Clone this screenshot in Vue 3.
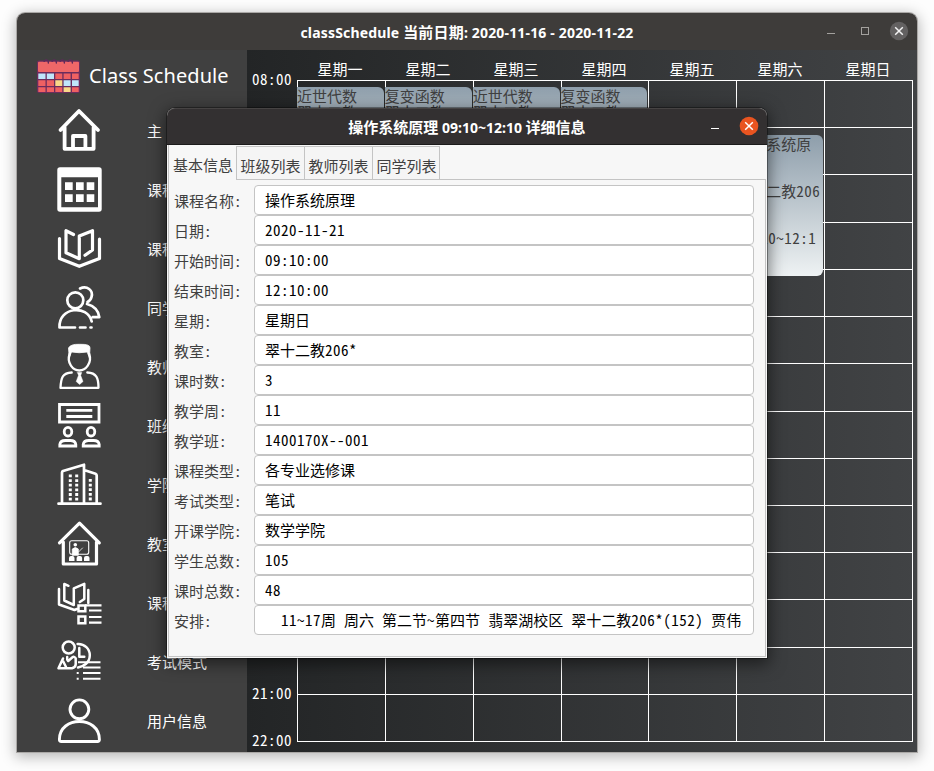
<script setup>
import { h } from 'vue'

// Latin runs sit on an 8px cell, ideographs on a 15px one.
const MixedText = (props) =>
  h('span', { class: 'mixed' },
    props.text.split(/([\x20-\x7e]+)/).filter(Boolean).map((part) =>
      /^[\x20-\x7e]/.test(part) ? h('span', { class: 'latin' }, part) : part))
MixedText.props = ['text']

const menu = [
  { icon: 'home', label: '主  页' },
  { icon: 'calendar', label: '课程表' },
  { icon: 'book', label: '课程信息' },
  { icon: 'students', label: '同学信息' },
  { icon: 'teacher', label: '教师信息' },
  { icon: 'class', label: '班级信息' },
  { icon: 'college', label: '学院信息' },
  { icon: 'classroom', label: '教室信息' },
  { icon: 'courseMode', label: '课程模式' },
  { icon: 'examMode', label: '考试模式' },
  { icon: 'user', label: '用户信息' },
]
const days = ['星期一', '星期二', '星期三', '星期四', '星期五', '星期六', '星期日']
const hours = [
  { text: '08:00', row: 1 },
  { text: '21:00', row: 14 },
  { text: '22:00', row: 15 },
]
const events = [
  { col: 1, name: '近世代数' },
  { col: 2, name: '复变函数' },
  { col: 3, name: '近世代数' },
  { col: 4, name: '复变函数' },
]
const tabs = ['基本信息', '班级列表', '教师列表', '同学列表']
const fields = [
  ['课程名称:', '操作系统原理'],
  ['日期:', '2020-11-21'],
  ['开始时间:', '09:10:00'],
  ['结束时间:', '12:10:00'],
  ['星期:', '星期日'],
  ['教室:', '翠十二教206*'],
  ['课时数:', '3'],
  ['教学周:', '11'],
  ['教学班:', '1400170X--001'],
  ['课程类型:', '各专业选修课'],
  ['考试类型:', '笔试'],
  ['开课学院:', '数学学院'],
  ['学生总数:', '105'],
  ['课时总数:', '48'],
  ['安排:', '  11~17周 周六 第二节~第四节 翡翠湖校区 翠十二教206*(152) 贾伟'],
]
</script>

<template>
  <div class="desktop">
    <div class="window">
      <header class="titlebar">
        <h1 class="title main-title">classSchedule <span class="han">当前日期</span>: 2020-11-16 - 2020-11-22</h1>
        <svg class="controls" width="90" height="24" viewBox="0 0 90 24" fill="none">
          <path d="M5 14.500h8" stroke="#a3a19e" />
          <rect x="39.500" y="8.500" width="7" height="7" stroke="#a3a19e" />
          <circle cx="77" cy="12" r="9.200" fill="#636161" />
          <path d="M73.200 8.200l7.600 7.600M80.800 8.200l-7.600 7.600" stroke="#f4f4f4" stroke-width="1.500" />
        </svg>
      </header>
      <div class="content">
        <aside class="sidebar">
          <div class="brand">
            <svg width="44" height="36" viewBox="0 0 44 36">
              <rect x="0" y="2.500" width="43" height="32.500" rx="2" fill="#6b2c5e" />
              <rect x="1" y="3.800" width="41" height="10.200" rx="1" fill="#ef6768" />
              <path d="M18.300 15.500h7v5.500h-7zM26.600 15.500h7v5.500h-7zM35 15.500h6.700v5.500H35zM1.300 22.300h7.200v5.700H1.300zM9.800 22.300h7.200v5.700H9.800zM1.300 29.300h7.200v4.700H1.300zM9.800 29.300h7.200v4.700H9.800zM18.300 29.300h7v4.700h-7zM35 29.300h6.700v4.700H35z" fill="#ef6062" />
              <path d="M1.300 15.500h7.200v5.500H1.300zM9.800 15.500h7.200v5.500H9.800zM26.600 22.300h7v5.700h-7zM35 22.300h6.700v5.700H35z" fill="#bfe6fb" />
              <path d="M18.300 22.300h7v5.700h-7zM26.600 29.300h7v4.700h-7z" fill="#f9d888" />
              <path d="M7 4a2.200 2.200 0 1 1 4 1.500M15 4a2.200 2.200 0 1 1 4 1.500M23 4a2.200 2.200 0 1 1 4 1.500M31 4a2.200 2.200 0 1 1 4 1.500" fill="none" stroke="#5d2a5a" stroke-width="1.400" />
            </svg>
            <span class="brand-name">Class Schedule</span>
          </div>
          <nav class="menu">
            <a v-for="item in menu" :key="item.label" class="menu-item">
              <svg class="icon" width="46" height="48" viewBox="0 0 46 48" fill="none" stroke="#fff" stroke-width="3" stroke-linecap="round" stroke-linejoin="round">
                <g v-if="item.icon === 'home'" stroke-width="3.800">
                  <path d="M4.500 24L23 5 42 24M8.600 21.500v21.300h29V21.500M17 42V30h12.400v12" />
                </g>
                <g v-else-if="item.icon === 'calendar'" stroke="none" fill="#fff">
                  <path fill-rule="evenodd" d="M4 2.300h39q2.700 0 2.700 2.700v39q0 2.700-2.700 2.700H4q-2.700 0-2.700-2.700V5q0-2.700 2.700-2.700zM5.300 12.300v30H42v-30z" />
                  <path d="M9 17.300h7.700V25H9zM20 17.300h7.700V25H20zM30.700 17.300h7.600V25h-7.600zM9 29.300h7.700V37H9zM20 29.300h7.700V37H20zM30.700 29.300h7.600V37h-7.600z" />
                </g>
                <g v-else-if="item.icon === 'book'" stroke-width="3.200">
                  <path d="M3.500 14.500v20l19.800 7.800 20.200-7.800V15.200M17.500 10.500L10 6.700v22l13.300 6V12l13.200-5.300v19.300l-7.500 5.300" />
                </g>
                <g v-else-if="item.icon === 'students'" stroke-width="2.700">
                  <circle cx="19.300" cy="17.300" r="8" />
                  <path d="M24 5.500c7-3.500 13.500 2 11.500 8.500q-.8 3.500-4 5M31 21c7 2 11.500 6.500 12.300 13.200h-6.600M3.500 44.500c-1-20.500 28-23.500 32.200-6M3.500 44.500h15.500M24 44.500h5.500M34.500 44.500h1" />
                </g>
                <g v-else-if="item.icon === 'teacher'" stroke-width="2.300">
                  <path d="M13.500 12c-3 9 3.500 16.500 9.800 16.500s13-7.500 10-16.500M15.700 30.500c-9 .5-10.700 5-11.200 15.300h38c0-10-2-14.800-11.200-15.300" />
                  <path d="M13.300 16L12.500 6q2-4 11-3.700Q34.500 2 34 6l-.6 10-2.200-6q-8 1.500-15.500 0z" fill="#fff" stroke-width=".8" />
                  <path d="M21.500 30.500h4.200l-1 3 2.300 6-3.400 3-3.400-3 2.300-6z" fill="#fff" stroke-width=".5" />
                </g>
                <g v-else-if="item.icon === 'class'" stroke-width="2.800" stroke-linejoin="miter" stroke-linecap="butt">
                  <path d="M3.500 3.500h39.500v17.500H3.500zM10.300 9.300h26M10.300 15.500h26" />
                  <ellipse cx="12" cy="30.700" rx="3.800" ry="4.300" />
                  <ellipse cx="35" cy="30.700" rx="3.800" ry="4.300" />
                  <path d="M3.800 45v-1.500q.5-4 5.500-4h5q5 0 5.500 4V45zM27.200 45v-1.500q.5-4 5.500-4h5q5 0 5.500 4V45z" />
                </g>
                <g v-else-if="item.icon === 'college'" stroke-width="2.700">
                  <path d="M2.500 43.700h42M6 43V12.500Q6 11.500 7 11L28 4.700V43M28 10l11.500 3.800q1.200.5 1.200 1.700V43" />
                  <path d="M14.300 14.500v26M20.700 14.500v26M34.300 19v21.500" stroke-dasharray="2.800 1.850" stroke-linecap="butt" stroke-width="3" />
                </g>
                <g v-else-if="item.icon === 'classroom'" stroke-width="3.200">
                  <path d="M3.500 23.800L23.500 4.200 43.300 23.800M7.300 23v22h33.200V23" />
                  <rect x="13.700" y="21.700" width="19" height="13.500" rx="2" stroke-width="1.100" />
                  <circle cx="19.300" cy="25.800" r="1.800" fill="#fff" stroke="none" />
                  <path d="M16.300 36v-6q3-3 6 0V36zM22.500 33l4-4" fill="#fff" stroke-width=".8" />
                  <path d="M13 42v-3q0-2 2-2h1.500q2 0 2 2v3zM20.600 42v-3q0-2 2-2h1.500q2 0 2 2v3zM28 42v-3q0-2 2-2h1.500q2 0 2 2v3z" fill="#fff" stroke="none" />
                </g>
                <g v-else-if="item.icon === 'courseMode'" stroke-width="2.500">
                  <path d="M3 11v15.500l15.500 5.500 2.500-1M32.300 12v13M12.500 7.800L8.300 6v16.500l9.500 4.500V10.300L28.300 5.800V21l-4.500 3" />
                  <path d="M22.500 27.500h6.800v5.800h-6.800zM22.500 38.500h6.800v6.800h-6.800z" stroke-linejoin="miter" />
                  <path d="M29 27.300h16.500M33 32.500h12.500M33 39h12.500M33 44.700h12.500" stroke-width="2.200" stroke-linecap="butt" />
                </g>
                <g v-else-if="item.icon === 'examMode'" stroke-width="2.500">
                  <circle cx="12.700" cy="10.500" r="6" />
                  <path d="M21.500 7c7-.5 12.500 5 12.300 11.500C33.600 25.500 28 29.500 22 30.500M23.300 11v8.700h5M7 21.500l-4.500 9.800h13.500q3.500-1 3.700-4v-6q-1.500-2.500-3.500-.8l-4 3.500q-1.500-1.500-1-4M7 24l3 6" />
                  <path d="M22 25.300h22.500M27 30.500h17.500M27 36h17.500M27 41.700h17.500M20.700 36h2M20.700 41.700h2" stroke-width="2" stroke-linecap="butt" />
                </g>
                <g v-else stroke-width="2.900">
                  <circle cx="23.400" cy="13.300" r="9.400" />
                  <path d="M3.400 43.500c0-24 40-24 40 0q0 2-2 2h-36q-2 0-2-2z" />
                </g>
              </svg>
              <span class="menu-label">{{ item.label }}</span>
            </a>
          </nav>
        </aside>
        <main class="schedule">
          <div class="days"><span v-for="d in days" :key="d">{{ d }}</span></div>
          <div class="hours">
            <MixedText v-for="t in hours" :key="t.text" :text="t.text" :style="{ gridRow: t.row }" />
          </div>
          <div class="grid">
            <i v-for="n in 98" :key="n" class="cell"></i>
            <div class="layer">
              <div v-for="e in events" :key="e.col" class="event" :style="{ gridColumn: e.col }">
                <span>{{ e.name }}</span><span>翠十二教</span>
              </div>
              <div class="event wide">
                <span>操作系统原</span><MixedText text="翠十二教206" /><MixedText text="09:10~12:1" />
              </div>
            </div>
          </div>
        </main>
      </div>
    </div>

    <section class="dialog">
      <header class="dialog-bar">
        <h2 class="title dialog-title"><span class="han">操作系统原理</span> 09:10~12:10 <span class="han">详细信息</span></h2>
        <svg class="dialog-controls" width="60" height="24" viewBox="0 0 60 24" fill="none">
          <path d="M4 14.500h8" stroke="#fff" />
          <circle cx="42" cy="12" r="9.300" fill="#e95420" />
          <path d="M38.200 8.200l7.600 7.600M45.800 8.200l-7.600 7.600" stroke="#fff" stroke-width="1.500" />
        </svg>
      </header>
      <div class="pane">
        <div class="tabs">
          <button v-for="(t, i) in tabs" :key="t" class="tab" :class="{ active: i === 0 }">{{ t }}</button>
          <div class="tab-rest"></div>
        </div>
        <div class="form">
          <div v-for="f in fields" :key="f[0]" class="row">
            <label><MixedText :text="f[0]" /></label>
            <div class="field"><MixedText :text="f[1]" /></div>
          </div>
        </div>
      </div>
    </section>
  </div>
</template>

<style>
body { background: #fff; }
.mixed { white-space: pre; }
.mixed .latin { letter-spacing: .5px; }
</style>

<style scoped>
* { box-sizing: border-box; }
.desktop {
  position: relative;
  width: 934px;
  height: 771px;
  padding: 13px 17px 19px;
  overflow: hidden;
  background: #fdfdfd;
  font: 15px/20px "Noto Sans Mono CJK SC", "Noto Sans CJK SC", sans-serif;
}
.window {
  display: flex;
  flex-direction: column;
  height: 739px;
  border-radius: 8px 8px 0 0;
  box-shadow: 0 0 0 1px #aaa8a6, 0 3px 14px 2px rgba(0, 0, 0, .28);
}
.titlebar {
  display: flex;
  justify-content: center;
  align-items: center;
  flex: 0 0 37px;
  position: relative;
  padding-top: 2px;
  background: #3e3c3a;
  border-radius: 8px 8px 0 0;
}
.title {
  margin: 0;
  color: #fff;
  font: bold 14px/20px "Noto Sans", "Noto Sans CJK SC", sans-serif;
  white-space: nowrap;
}
.main-title { letter-spacing: .17px; }
.title .han { font-size: 15px; }
.controls { position: absolute; right: 5px; top: 6px; }
.content { display: flex; flex: 1; min-height: 0; }
.sidebar { width: 230px; background: #404040; color: #fff; }
.brand { display: flex; align-items: center; gap: 8px; height: 51px; padding: 0 0 0 20px; }
.brand-name { font: 20px/26px "Noto Sans", sans-serif; letter-spacing: .07px; white-space: nowrap; }
.menu-item { display: flex; align-items: center; height: 59px; padding-left: 39px; }
.icon { margin-bottom: 2px; }
.menu-label { margin-left: 45px; white-space: pre; }
.schedule {
  display: grid;
  grid-template: 30px 662px / 50px 616px;
  flex: 1;
  background: linear-gradient(to right, #232526, #414345);
  color: #fff;
}
.days { grid-column: 2; display: grid; grid-template-columns: repeat(7, 1fr); margin: 0 1px 0 -1px; text-align: center; padding-top: 9px; }
.hours {
  grid-column: 1;
  display: grid;
  grid-template-rows: repeat(15, 47.21px);
  margin-top: -11px;
  padding-left: 5px;
}
.grid {
  position: relative;
  display: grid;
  grid-template: repeat(14, 1fr) / repeat(7, 1fr);
  border-right: 1px solid #fff;
  border-bottom: 1px solid #fff;
}
.cell { border-top: 1px solid #fff; border-left: 1px solid #fff; }
.layer { position: absolute; inset: 0; display: grid; grid-template-columns: repeat(7, 1fr); align-items: start; }
.event {
  display: flex;
  flex-direction: column;
  grid-row: 1;
  height: 80px;
  margin: 7px 1px 0 0;
  padding-top: 1px;
  overflow: hidden;
  border-radius: 0 6px 6px 0;
  background: linear-gradient(#8e9eab, #eef2f3);
  color: #404040;
  line-height: 16px;
  white-space: nowrap;
}
.event.wide { grid-column: 6; height: 141px; margin-top: 55px; padding: 0; line-height: 47px; border-radius: 6px; }
.event.wide > span { flex: 0 0 47px; margin-top: -15px; margin-bottom: 15px; }
.dialog {
  position: absolute;
  left: 167px;
  top: 108px;
  width: 600px;
  height: 550px;
  display: flex;
  flex-direction: column;
  border-radius: 8px 8px 0 0;
  background: #f7f7f7;
  box-shadow: 0 0 0 1px rgba(0, 0, 0, .35), 0 4px 16px 2px rgba(0, 0, 0, .5);
}
.dialog-bar {
  position: relative;
  display: flex;
  align-items: center;
  justify-content: center;
  flex: 0 0 37px;
  padding-top: 2px;
  background: #333031;
  border-top: 1px solid #464343;
  border-bottom: 1px solid #1c1b1b;
  border-radius: 8px 8px 0 0;
}
.dialog-controls { position: absolute; right: 0; top: 5px; }
.pane { display: flex; flex-direction: column; flex: 1; margin: 0 1px 1px; border: 1px solid #c4c4c4; border-top: 0; border-right: 0; }
.tabs { display: flex; height: 35px; }
.tab {
  width: 68px;
  margin: 1px 0 0;
  padding: 6px 0 0;
  border: 1px solid #c4c4c4;
  border-right: 0;
  background: #f5f5f5;
  color: #404040;
  font: inherit;
  white-space: nowrap;
}
.tab.active { width: 67px; padding-top: 4px; border-color: transparent; background: none; }
.tab-rest { flex: 1; margin-left: -1px; border-bottom: 1px solid #c4c4c4; border-left: 1px solid #c4c4c4; margin-top: 1px; }
.form { flex: 1; padding: 5px 11px 0 5px; border-right: 1px solid #c4c4c4; }
.row { display: flex; height: 30px; }
label { width: 80px; padding-top: 6px; color: #404040; }
.field {
  flex: 1;
  padding: 4px 10px 0;
  border: 1px solid #c4c4c4;
  border-radius: 4px;
  background: #fff;
  color: #000;
}
</style>
